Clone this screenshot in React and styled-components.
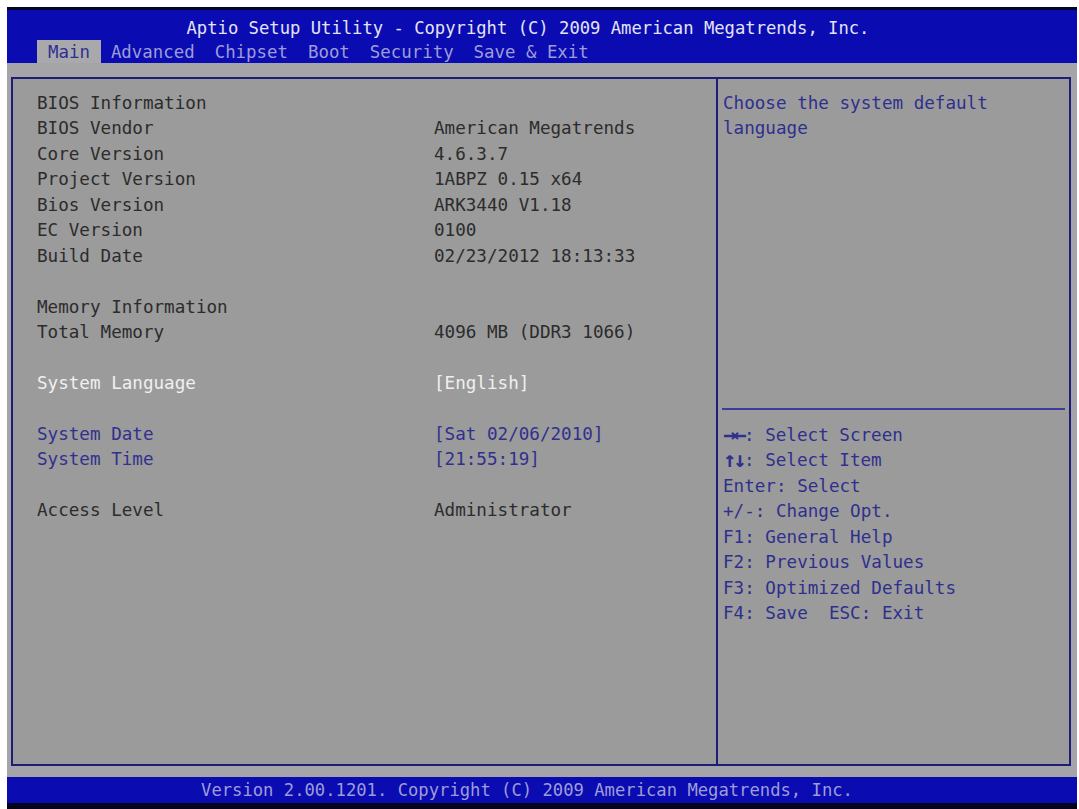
import React from "react";
import styled, { createGlobalStyle } from "styled-components";

const GlobalStyle = createGlobalStyle`
  html, body { margin: 0; padding: 0; background: #ffffff; }
  body { font-family: "DejaVu Sans Mono", "Liberation Mono", monospace; }
`;

const Screen = styled.div`
  margin: 7px 2px 0 7px;
  width: 1070px;
  height: 802px;
  display: flex;
  flex-direction: column;
  font-family: "DejaVu Sans Mono", "Liberation Mono", monospace;
  font-size: 17.6px;
  letter-spacing: 0;
`;

const TopStrip = styled.div`
  height: 3px;
  background: #05052a;
`;

const Header = styled.header`
  height: 53px;
  background: #0b0bb2;
  display: flex;
  flex-direction: column;
  padding-top: 6px;
  box-sizing: border-box;
`;

const Title = styled.div`
  height: 24px;
  line-height: 24px;
  text-align: center;
  padding-right: 28px;
  color: #e4e4f4;
  font-size: 17.2px;
`;

const Tabs = styled.nav`
  display: flex;
  height: 23px;
  padding-left: 30px;
`;

const Tab = styled.div`
  height: 23px;
  line-height: 24px;
  padding: 0 ${(p) => (p.$active ? "11px" : "10px")};
  background: ${(p) => (p.$active ? "#a9a9ab" : "transparent")};
  color: ${(p) => (p.$active ? "#2f2f94" : "#9d9dd8")};
  font-size: 17.4px;
  white-space: pre;
`;

const Body = styled.main`
  flex: 1;
  background: #a5a5a9;
  padding: 14px 6px 11px 4px;
  display: flex;
  box-sizing: border-box;
`;

const Frame = styled.div`
  flex: 1;
  display: flex;
  border: 2px solid #1e1e78;
  background: #9b9b9b;
`;

const Main = styled.section`
  width: 703px;
  padding: 12px 0 0 24px;
  box-sizing: border-box;
`;

const Row = styled.div`
  display: grid;
  grid-template-columns: 397px 1fr;
  height: 25.44px;
  line-height: 25.44px;
  color: ${(p) =>
    p.$tone === "white" ? "#f0f0f0" : p.$tone === "blue" ? "#30308f" : "#2c2c2c"};
  white-space: pre;
`;

const Side = styled.aside`
  flex: 1;
  display: flex;
  flex-direction: column;
  border-left: 2px solid #1e1e78;
`;

const HelpTop = styled.div`
  height: 329px;
  padding: 12px 0 0 5px;
  box-sizing: border-box;
`;

const Divider = styled.div`
  height: 2px;
  margin: 0 4px 0 4px;
  background: #3c3ca0;
`;

const HelpBottom = styled.div`
  padding: 13px 0 0 5px;
`;

const HelpLine = styled.div`
  height: 25.44px;
  line-height: 25.44px;
  color: #2f2f8e;
  white-space: pre;
`;

const Arrow = styled.span`
  display: inline-block;
  width: 21px;
  font-size: 22px;
  font-weight: bold;
  letter-spacing: -3px;
  line-height: 20px;
  vertical-align: top;
  margin-top: 2px;
`;

const Footer = styled.footer`
  height: 26px;
  line-height: 26px;
  background: #0b0bb2;
  color: #9d9dd8;
  text-align: center;
  padding-right: 30px;
  font-size: 17.2px;
`;

const BottomStrip = styled.div`
  height: 6px;
  background: #03031a;
`;

const tabs = ["Main", "Advanced", "Chipset", "Boot", "Security", "Save & Exit"];

const rows = [
  ["BIOS Information", ""],
  ["BIOS Vendor", "American Megatrends"],
  ["Core Version", "4.6.3.7"],
  ["Project Version", "1ABPZ 0.15 x64"],
  ["Bios Version", "ARK3440 V1.18"],
  ["EC Version", "0100"],
  ["Build Date", "02/23/2012 18:13:33"],
  ["", ""],
  ["Memory Information", ""],
  ["Total Memory", "4096 MB (DDR3 1066)"],
  ["", ""],
  ["System Language", "[English]", "white"],
  ["", ""],
  ["System Date", "[Sat 02/06/2010]", "blue"],
  ["System Time", "[21:55:19]", "blue"],
  ["", ""],
  ["Access Level", "Administrator"],
];

const help = [
  ["→←", ": Select Screen"],
  ["↑↓", ": Select Item"],
  [null, "Enter: Select"],
  [null, "+/-: Change Opt."],
  [null, "F1: General Help"],
  [null, "F2: Previous Values"],
  [null, "F3: Optimized Defaults"],
  [null, "F4: Save  ESC: Exit"],
];

export default function App() {
  return (
    <>
      <GlobalStyle />
      <Screen>
        <TopStrip />
        <Header>
          <Title>Aptio Setup Utility - Copyright (C) 2009 American Megatrends, Inc.</Title>
          <Tabs>
            {tabs.map((t, i) => (
              <Tab key={t} $active={i === 0}>
                {t}
              </Tab>
            ))}
          </Tabs>
        </Header>
        <Body>
          <Frame>
            <Main>
              {rows.map(([l, v, tone], i) => (
                <Row key={i} $tone={tone}>
                  <span>{l}</span>
                  <span>{v}</span>
                </Row>
              ))}
            </Main>
            <Side>
              <HelpTop>
                <HelpLine>Choose the system default</HelpLine>
                <HelpLine>language</HelpLine>
              </HelpTop>
              <Divider />
              <HelpBottom>
                {help.map(([a, t], i) => (
                  <HelpLine key={i}>
                    {a && <Arrow>{a}</Arrow>}
                    {t}
                  </HelpLine>
                ))}
              </HelpBottom>
            </Side>
          </Frame>
        </Body>
        <Footer>Version 2.00.1201. Copyright (C) 2009 American Megatrends, Inc.</Footer>
        <BottomStrip />
      </Screen>
    </>
  );
}
